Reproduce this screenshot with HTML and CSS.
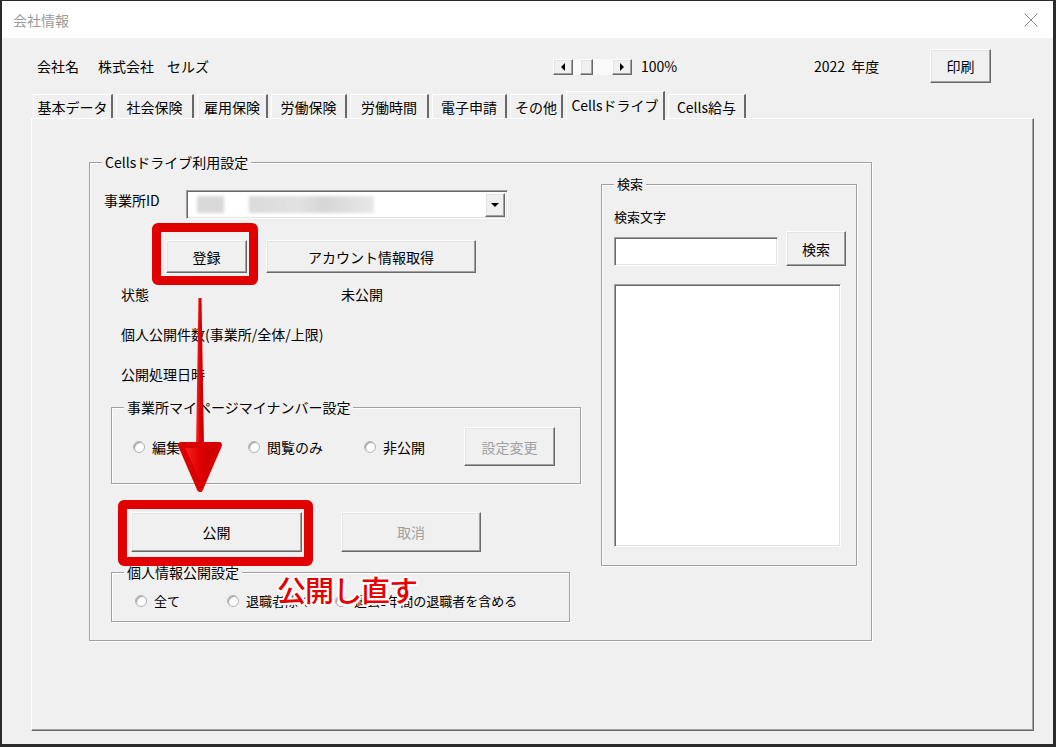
FILE: index.html
```html
<!DOCTYPE html>
<html lang="ja">
<head>
<meta charset="utf-8">
<title>会社情報</title>
<link rel="stylesheet" href="styles.css">
</head>
<body>
<div class="window">
  <div class="titlebar">
    <span class="title">会社情報</span>
    <svg class="close" width="14" height="14" viewBox="0 0 14 14"><path d="M0.5 0.5 L13.5 13.5 M13.5 0.5 L0.5 13.5" stroke="#8a8a8a" stroke-width="1" fill="none"/></svg>
  </div>

  <div class="topbar">
    <div class="company"><span>会社名</span><span class="cname">株式会社</span><span class="cname2">セルズ</span></div>
    <div class="hscroll">
      <span class="btn sb-btn"><i class="tri-l"></i></span>
      <span class="sb-track"><span class="btn sb-thumb"></span></span>
      <span class="btn sb-btn"><i class="tri-r"></i></span>
    </div>
    <div class="zoom">100%</div>
    <div class="year">2022&nbsp;&nbsp;年度</div>
    <div class="btn print">印刷</div>
  </div>

  <div class="tabs">
    <div class="tab">基本データ</div>
    <div class="tab">社会保険</div>
    <div class="tab">雇用保険</div>
    <div class="tab">労働保険</div>
    <div class="tab">労働時間</div>
    <div class="tab">電子申請</div>
    <div class="tab">その他</div>
    <div class="tab selected">Cellsドライブ</div>
    <div class="tab">Cells給与</div>
  </div>

  <div class="page">
    <div class="group main">
      <span class="legend">Cellsドライブ利用設定</span>
      <div class="leftcol">
        <div class="row-id">
          <span class="id-label">事業所ID</span>
          <div class="field combo">
            <span class="blur b1"></span><span class="blur b2"></span>
            <span class="btn dd"><i class="tri-d"></i></span>
          </div>
        </div>
        <div class="row-btns">
          <div class="btn reg">登録</div>
          <div class="btn acct">アカウント情報取得</div>
        </div>
        <div class="text-row first"><span class="state-label">状態</span><span>未公開</span></div>
        <div class="text-row">個人公開件数(事業所/全体/上限)</div>
        <div class="text-row">公開処理日時</div>

        <div class="group sub1">
          <span class="legend">事業所マイページマイナンバー設定</span>
          <div class="opt-row">
            <span class="ropt w1"><span class="radio"></span>編集可</span>
            <span class="ropt w2"><span class="radio"></span>閲覧のみ</span>
            <span class="ropt w3"><span class="radio"></span>非公開</span>
            <div class="btn disabled change">設定変更</div>
          </div>
        </div>

        <div class="row-pub">
          <div class="btn pub">公開</div>
          <div class="btn disabled cancel">取消</div>
        </div>

        <div class="group sub2">
          <span class="legend">個人情報公開設定</span>
          <div class="opt-row2">
            <span class="ropt v1"><span class="radio"></span>全て</span>
            <span class="ropt v2"><span class="radio"></span>退職者除く</span>
            <span class="ropt"><span class="radio"></span>過去3年間の退職者を含める</span>
          </div>
        </div>
      </div>

      <div class="group search">
        <span class="legend">検索</span>
        <div class="search-label">検索文字</div>
        <div class="search-row">
          <div class="field search-input"></div>
          <div class="btn search-btn">検索</div>
        </div>
        <div class="field listbox"></div>
      </div>
    </div>
  </div>

  <div class="hl hl1"></div>
  <div class="hl hl2"></div>
  <svg class="arrow" width="60" height="200" viewBox="0 0 60 200">
    <defs>
      <linearGradient id="ag" x1="0" y1="0" x2="1" y2="0">
        <stop offset="0" stop-color="#ff2a2a"/>
        <stop offset="0.5" stop-color="#e00000"/>
        <stop offset="1" stop-color="#b80000"/>
      </linearGradient>
    </defs>
    <polygon points="28.5,3 31.5,3 34,152 26,152" fill="url(#ag)"/>
    <path d="M11 150 L49 150 L30 194 Z" fill="url(#ag)" stroke="#d80000" stroke-width="6" stroke-linejoin="round"/>
  </svg>
  <div class="callout">公開し直す</div>
</div>
</body>
</html>
```

FILE: styles.css
```css
html, body {
  margin: 0;
  padding: 0;
  background: #1e1e1e;
}
body {
  font-family: "Noto Sans CJK JP", "Noto Sans", sans-serif;
  font-size: 14px;
  color: #000;
}
.window {
  position: relative;
  box-sizing: border-box;
  width: 1056px;
  height: 747px;
  border-style: solid;
  border-color: #2b2b2b;
  border-width: 1px 3px 3px 2px;
  background: #f0f0f0;
  display: flex;
  flex-direction: column;
  overflow: hidden;
}
.titlebar {
  height: 37px;
  flex: none;
  background: #fff;
  display: flex;
  align-items: center;
  justify-content: space-between;
  padding: 0 15px 0 11px;
  color: #9a9a9a;
  font-size: 14px;
}
.close { display: block; }

/* generic controls */
.btn {
  box-sizing: border-box;
  display: flex;
  align-items: center;
  justify-content: center;
  background: #f0f0f0;
  border: 1px solid;
  border-color: #fdfdfd #696969 #696969 #fdfdfd;
  box-shadow: inset -1px -1px 0 #a0a0a0, inset 1px 1px 0 #e3e3e3;
  color: #000;
  line-height: 20px;
}
.btn.disabled { color: #a0a0a0; }
.field {
  box-sizing: border-box;
  background: #fff;
  border: 1px solid;
  border-color: #a0a0a0 #fff #fff #a0a0a0;
  box-shadow: inset 1px 1px 0 #696969, inset -1px -1px 0 #e3e3e3;
}

/* top bar */
.topbar {
  flex: none;
  height: 34px;
  margin-top: 11px;
  padding-left: 35px;
  display: flex;
  align-items: center;
  line-height: 20px;
}
.company { width: 516px; display: flex; }
.cname { margin-left: 19px; }
.cname2 { margin-left: 13px; }
.hscroll {
  width: 79px;
  height: 16px;
  display: flex;
  margin-top: 1px;
}
.sb-btn { width: 20px; height: 16px; flex: none; }
.sb-track {
  flex: 1;
  background: #f9f9f9;
  display: flex;
  padding-left: 7px;
}
.sb-thumb { width: 13px; height: 16px; }
.tri-l, .tri-r, .tri-d { display: block; width: 0; height: 0; }
.tri-l { border-top: 4px solid transparent; border-bottom: 4px solid transparent; border-right: 4px solid #000; }
.tri-r { border-top: 4px solid transparent; border-bottom: 4px solid transparent; border-left: 4px solid #000; }
.tri-d { border-left: 4px solid transparent; border-right: 4px solid transparent; border-top: 4px solid #000; }
.zoom { margin-left: 9px; width: 173px; }
.year { width: 116px; }
.print { width: 61px; height: 34px; }

/* tabs */
.tabs {
  flex: none;
  height: 27px;
  margin-top: 8px;
  margin-left: 31px;
  display: flex;
  align-items: flex-end;
}
.tab {
  box-sizing: border-box;
  flex: none;
  height: 24px;
  margin-right: 3px;
  display: flex;
  align-items: center;
  justify-content: center;
  border-top: 1px solid #fff;
  border-left: 1px solid #fff;
  border-right: 2px solid #696969;
  background: #f0f0f0;
  line-height: 20px;
  padding-top: 1px;
  white-space: nowrap;
}
.tab:nth-child(1) { width: 80px; }
.tab:nth-child(2) { width: 78px; }
.tab:nth-child(3) { width: 71px; }
.tab:nth-child(4) { width: 76px; }
.tab:nth-child(5) { width: 79px; }
.tab:nth-child(6) { width: 75px; }
.tab:nth-child(7) { width: 53px; }
.tab:nth-child(9) { width: 78px; }
.tab.selected {
  width: 99px;
  height: 29px;
  margin-bottom: -2px;
  position: relative;
  z-index: 1;
  align-items: flex-start;
  padding-top: 3px;
}

/* tab page */
.page {
  flex: none;
  box-sizing: border-box;
  width: 1003px;
  height: 613px;
  margin-left: 29px;
  border-top: 1px solid #fff;
  border-left: 1px solid #fff;
  border-right: 1px solid #696969;
  border-bottom: 1px solid #696969;
  box-shadow: inset -1px -1px 0 #a0a0a0;
  padding: 43px 0 0 57px;
}

/* group boxes */
.group {
  position: relative;
  box-sizing: border-box;
  border: 1px solid #a0a0a0;
  box-shadow: 1px 1px 0 #fff, inset 1px 1px 0 #fff;
}
.legend {
  position: absolute;
  top: -11px;
  left: 12px;
  padding: 0 3px;
  background: #f0f0f0;
  line-height: 20px;
  white-space: nowrap;
}
.main {
  width: 783px;
  height: 479px;
  display: flex;
  align-items: flex-start;
}
.leftcol {
  box-sizing: border-box;
  width: 511px;
  padding: 27px 0 0 14px;
  display: flex;
  flex-direction: column;
  align-items: flex-start;
  line-height: 20px;
}
.row-id { display: flex; align-items: center; height: 29px; }
.id-label { width: 82px; margin-top: -10px; }
.combo {
  width: 322px;
  height: 29px;
  display: flex;
  align-items: center;
  padding: 0 2px 0 10px;
  position: relative;
}
.blur {
  height: 17px;
  background: #d9d9d9;
  filter: blur(1.5px);
}
.b1 { width: 27px; }
.b2 { width: 125px; margin-left: 25px; background: linear-gradient(90deg, #dadada, #e2e2e2 40%, #d6d6d6 60%, #e8e8e8); }
.dd { width: 20px; height: 24px; margin-left: auto; }

.row-btns { display: flex; margin-top: 21px; }
.reg { width: 81px; height: 33px; margin-left: 62px; }
.acct { width: 210px; height: 33px; margin-left: 19px; }

.text-row { margin-top: 20px; padding-left: 17px; display: flex; }
.text-row.first { margin-top: 11px; }
.state-label { width: 220px; }

.sub1 {
  width: 470px;
  height: 77px;
  margin: 23px 0 0 7px;
  padding: 19px 0 0 21px;
}
.opt-row { display: flex; align-items: center; height: 39px; }
.ropt { display: flex; align-items: center; white-space: nowrap; }
.radio {
  box-sizing: border-box;
  width: 12px;
  height: 12px;
  border-radius: 50%;
  background: #fff;
  border: 1px solid #b4b4b4;
  box-shadow: inset 1px 1px 1px #9a9a9a;
  margin-right: 7px;
  flex: none;
}
.w1 { width: 115px; }
.w2 { width: 116px; }
.w3 { width: 100px; }
.change { width: 91px; height: 39px; }

.row-pub { display: flex; margin-top: 28px; }
.pub { width: 171px; height: 40px; margin-left: 27px; }
.cancel { width: 140px; height: 40px; margin-left: 39px; }

.sub2 {
  width: 459px;
  height: 50px;
  margin: 20px 0 0 7px;
  padding: 18px 0 0 23px;
}
.opt-row2 { display: flex; align-items: center; height: 20px; font-size: 13px; }
.v1 { width: 92px; }
.v2 { width: 108px; }

/* search */
.search {
  width: 256px;
  height: 382px;
  margin-top: 21px;
  padding: 22px 0 0 12px;
  line-height: 20px;
  font-size: 13px;
}
.search-row { display: flex; margin-top: 4px; align-items: flex-start; }
.search-input { width: 164px; height: 29px; margin-top: 6px; }
.search-btn { width: 60px; height: 35px; margin-left: 8px; font-size: 14px; }
.listbox { width: 227px; height: 263px; margin-top: 18px; }

/* overlays */
.hl {
  position: absolute;
  box-sizing: border-box;
  border: 9px solid #e10000;
  border-radius: 6px;
}
.hl1 { left: 150px; top: 222px; width: 106px; height: 62px; }
.hl2 { left: 116px; top: 499px; width: 195px; height: 66px; }
.arrow { position: absolute; left: 168px; top: 294px; }
.callout {
  position: absolute;
  left: 275px;
  top: 571px;
  font-size: 29px;
  line-height: 34px;
  font-weight: 500;
  color: #e60000;
  letter-spacing: -1px;
  text-shadow: 2px 0 0 #fff, -2px 0 0 #fff, 0 2px 0 #fff, 0 -2px 0 #fff,
    1.5px 1.5px 0 #fff, -1.5px 1.5px 0 #fff, 1.5px -1.5px 0 #fff, -1.5px -1.5px 0 #fff;
}
```
